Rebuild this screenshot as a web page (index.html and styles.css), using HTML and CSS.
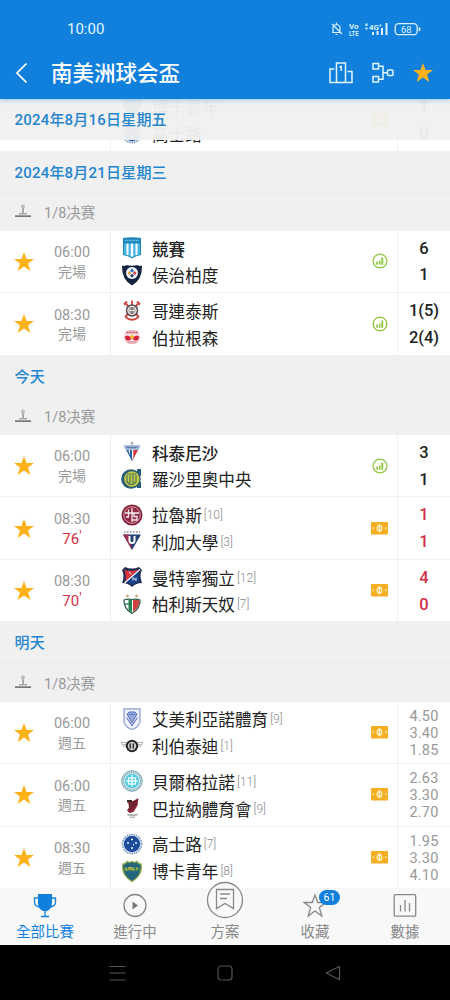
FILE: index.html
```
<!DOCTYPE html>
<html lang="zh-Hant">
<head>
    <meta charset="UTF-8">
    <title>南美洲球会盃</title>
    <link rel="stylesheet" href="styles.css">
</head>
<body>
<svg class="defs">
    <symbol id="star" viewBox="0 0 20 20"><path d="M10 0l2.6 7H20l-5.9 4.6L16.3 19 10 14.6 3.7 19l2.2-7.4L0 7h7.400z"/></symbol>
    <symbol id="stage" viewBox="0 0 17 14"><path d="M0 11.300h16v1.700H0z" fill="#777"/><path d="M4 10.500h8v-1.500H4z" fill="#aaa"/><path d="M7.200 4h1.600v5H7.200z" fill="#999"/><circle cx="8" cy="2.500" r="1.900" fill="#bbb"/></symbol>
    <symbol id="chart" viewBox="0 0 16 16"><circle cx="8" cy="8" r="6.900" fill="none" stroke="#8dc63f" stroke-width="1.300"/><path d="M4.300 8.500h1.700v3.200H4.300zM7 7.500h1.500v4.200H7zM9.300 4.500h1.900v7.200H9.300z" fill="#8dc63f"/></symbol>
    <symbol id="cash" viewBox="0 0 17 13"><rect width="17" height="12.500" rx="1" fill="#f5ae23"/><ellipse cx="8.500" cy="6.250" rx="2.200" ry="2.800" fill="none" stroke="#fff3c8" stroke-width="1.400"/><path d="M8.500 2v8.500" stroke="#fff3c8"/><path d="M1.700 4.700l1.600 1.550-1.600 1.550zM15.300 4.700l-1.600 1.550 1.600 1.550z" fill="#fff3c8"/></symbol>

    <!-- club crests -->
    <symbol id="racing" viewBox="0 0 22 22"><path d="M2 1q9-1.500 18 0v17q-5 .5-9 3.500-4-3-9-3.500z" fill="#1c84b8"/><path d="M3 6.500h16v11q-5 1-8 3-3-2-8-3z" fill="#48b4e0"/><path d="M5.500 6.500h2v11.500h-2zM9.800 6.500h2.400v13H9.800zM14.500 6.500h2v11.500h-2z" fill="#fff"/><path d="M4 3.500h14" stroke="#6fbfe3" stroke-width="1.500" stroke-dasharray="1.500 .7"/></symbol>
    <symbol id="huachipato" viewBox="0 0 22 22"><path d="M1 1.500q2.500 1 4.500-.5 5.500 1.500 11 0 2 1.500 4.500.5.500 14-10 20Q.5 15.500 1 1.500z" fill="#14233f"/><circle cx="11" cy="9" r="6" fill="#f1f3f8"/><path d="M11 4.500l2 2.200-2 1.800-2-1.800z" fill="#2b66b5"/><path d="M8.300 7l1.900 2.200-1.900 1.800-1.900-1.800z" fill="#e0a33c"/><path d="M13.700 7l1.900 2.200-1.900 1.800-1.900-1.800z" fill="#d33d45"/><path d="M11 9.800l2 2-2 1.800-2-1.800z" fill="#233865"/></symbol>
    <symbol id="corinthians" viewBox="0 0 22 22"><path d="M4 3l14 14M18 3L4 17" stroke="#c9453d" stroke-width="1.800"/><path d="M3 4.500l3-3M16 1.500l3 3M11 .5v5M4.500 17q6.500 5.500 13 0" stroke="#c9453d" stroke-width="1.800" fill="none"/><circle cx="11" cy="10.500" r="5.500" fill="#f4eeee" stroke="#5b4a4b" stroke-width="1.500"/><circle cx="11" cy="10.500" r="3.400" fill="#817779"/><path d="M9 8v5M13 8v5M8 10.500h6" stroke="#ddd"/></symbol>
    <symbol id="bragantino" viewBox="0 0 22 22"><rect x="4" y="4.500" width="14" height="13" rx="5" fill="#f6e9ec" stroke="#d8a3ac" stroke-width=".7"/><path d="M5.500 6.500h11" stroke="#ce5262" stroke-width="2" stroke-dasharray="1.400 .5"/><path d="M3.500 11q3-3 6 0h3q3-3 6 0l-2 3.500h-3L11 12.500 8.500 14.500h-3z" fill="#d81f3b"/><circle cx="11" cy="11" r="2" fill="#f1b82d"/><path d="M6.500 16h9" stroke="#dc8490" stroke-width="1.300"/></symbol>
    <symbol id="fortaleza" viewBox="0 0 22 22"><path d="M11 .3l.6 1.200 1.200.2-.9.9.2 1.200-1.100-.6-1.100.6.2-1.200-.9-.9 1.200-.2z" fill="#8899b0"/><path d="M3 5h16l-8 15z" fill="#2765aa"/><path d="M11 9h6l-6 11z" fill="#d63a43"/><path d="M7.500 9H9v5zM11 9h1.300v7L11 19z" fill="#fff"/><path d="M2.500 4h17l-2 5h-13z" fill="#aabfda"/><path d="M5 6.500h12" stroke="#456f9f" stroke-width="1.600" stroke-dasharray="1.600 .5"/></symbol>
    <symbol id="central" viewBox="0 0 22 22"><circle cx="10" cy="11" r="9.800" fill="#285c78"/><path d="M16 1h4v7h-4zM16 14h4v6h-4z" fill="#285c78"/><circle cx="10.800" cy="11" r="7.700" fill="#c5c944"/><path d="M6 7v7q4.500 5 9 0V7M9 7v8M12 7v8M6 6h9" fill="none" stroke="#4b7862" stroke-width="1.200"/></symbol>
    <symbol id="lanus" viewBox="0 0 22 22"><circle cx="11" cy="11" r="10.500" fill="#822138"/><circle cx="11" cy="11" r="8.300" fill="#932942" stroke="#dfbec6" stroke-width=".8"/><path d="M7.500 5.500V13H5M4 9h14M11 4v14M17 9h-4v3.500h3V16h-5" fill="none" stroke="#f5eef0" stroke-width="1.300"/></symbol>
    <symbol id="ldu" viewBox="0 0 22 22"><path d="M3 2h16" stroke="#8c8398" stroke-width="1.500" stroke-dasharray="1.500 1.500"/><path d="M2 4.500h18L11 20z" fill="#263f77"/><path d="M2 4.500h6L11 20z" fill="#9d2f4c"/><path d="M8.500 6v4.500q0 2.500 2.500 2.500t2.500-2.500V6" fill="none" stroke="#fff" stroke-width="2"/></symbol>
    <symbol id="medellin" viewBox="0 0 22 22"><path d="M1 4l3-3q7 3 14 0l3 3q-3 5 0 13-6 0-10 4-4-4-10-4 3-7 0-13z" fill="#202d57"/><path d="M3 4q8 2.500 15-1L4.500 15.500Q5.500 8 3 4z" fill="#df333c"/><path d="M18 5Q17 10 18.500 15.500 14 16 11 19q-3-3-6-3z" fill="#1b438b"/><path d="M3.500 17L19 3.500" stroke="#fff" stroke-width="1.200"/><path d="M8 5.500l2 3M12 14.500v-3l3 3v-3" stroke="#fff" stroke-width=".9" fill="none"/></symbol>
    <symbol id="palestino" viewBox="0 0 22 22"><path d="M6.500 1l.6 1.200 1.200.2-.9.9.2 1.200-1.100-.6-1.100.6.200-1.200-.9-.9 1.200-.2zM15.500 1l.6 1.200 1.200.2-.9.9.2 1.200-1.100-.6-1.100.6.200-1.200-.9-.9 1.200-.2z" fill="#b79b61"/><path d="M3 7q4-1.500 8-.5 4-1 8 .5.500 8.500-8 13.500Q2.500 15.500 3 7z" fill="#fff" stroke="#315b44" stroke-width="1.200"/><path d="M7.500 6.500H11v13.500l-3.500-3z" fill="#278357"/><path d="M12 7h6.300q.5 7-6.300 12z" fill="#cf4140"/><path d="M3 11h8" stroke="#277350" stroke-width="1.300"/></symbol>
    <symbol id="ameliano" viewBox="0 0 22 22"><path d="M3 .8h16V14q-1 5-8 7.500Q4 19 3 14z" fill="#eef0fb" stroke="#8a9bd0" stroke-width="1.200"/><path d="M6 6l2-2h6l2 2-5 9z" fill="#93a7dc" stroke="#6076bd"/><path d="M5.500 9.500L11 17.500l5.500-8M8 6.500h6" fill="none" stroke="#6076bd" stroke-width="1.100"/></symbol>
    <symbol id="libertad" viewBox="0 0 22 22"><path d="M0 7.500h6M16 7.500h6M1.500 9.500H5M20.500 9.500H17M3 11.500h2M19 11.500h-2M0 7.500l3 4.500M22 7.500L19 12" fill="none" stroke="#aaa" stroke-width=".9"/><circle cx="11" cy="11" r="5.200" fill="#ccc" stroke="#292929" stroke-width="2"/><path d="M8.500 8.500H10v5H8.500zM11.500 8.500H13v5h-1.500z" fill="#333"/></symbol>
    <symbol id="belgrano" viewBox="0 0 22 22"><circle cx="11" cy="11" r="10.300" fill="#cfe3e8" stroke="#7ba8b5" stroke-width="1"/><circle cx="11" cy="11" r="8.700" fill="none" stroke="#7ba8b5" stroke-width="1.300" stroke-dasharray="1.200 1"/><circle cx="11" cy="11" r="7" fill="#46c8df"/><path d="M11 5v12M5 11h12M7.500 8v6h7V8z" fill="none" stroke="#e8fbff" stroke-width="1.400"/></symbol>
    <symbol id="paranaense" viewBox="0 0 22 22"><path d="M7 4h5l5.500-3-1 7.500-4 6.500-4 1-2.500-2.500 2-3z" fill="#8c2433"/><path d="M8 10l8-7M8.500 13l7.500-7" stroke="#3b2730"/><path d="M6 3h5v2.500H6z" fill="#3a2a2d"/><path d="M6 17.500h11l-3 1.500H9zM9 20.500h5" stroke="#aaa" fill="#bbb" stroke-width=".8"/></symbol>
    <symbol id="cruzeiro" viewBox="0 0 22 22"><circle cx="11" cy="11" r="9.500" fill="none" stroke="#7e98c6" stroke-width="1.800" stroke-dasharray="1.500 .8"/><circle cx="11" cy="11" r="8.200" fill="#1d4c9c"/><path d="M11 5.500v2M10 6.500h2M7 9v2M6 10h2M15 9v2M14 10h2M11 14v2M10 15h2M12.500 11v1.500" stroke="#fff" stroke-width=".9"/></symbol>
    <symbol id="boca" viewBox="0 0 22 22"><path d="M2 4q3 0 4-2.500 2.500 1.500 5 0 2.500 1.500 5 0Q17 4 20 4q2 11-9 17.500Q0 15 2 4z" fill="#24647d" stroke="#8aa53f" stroke-width="1.200"/><path d="M3 7h16v4.500H3z" fill="#367a66"/><path d="M5 7.500V10h1.500M8 10V7.500h2V10M12 7.500V10h1.500M16 7.500V10" stroke="#d6c542" fill="none" stroke-width="1.200"/></symbol>
</svg>

<div class="app">
    <header class="header">
        <div class="status">
            <span class="clock">10:00</span>
            <svg width="92" height="16" viewBox="0 0 92 16" fill="none" stroke="#d9f1ff">
                <path d="M2 11.500h9M3 11V7q0-3 3.500-3.500Q10 4 10 7v4M5.500 13.500h2M2 3l10 10M6.500 1.500v2" stroke-width="1.200"/>
                <g fill="#d9f1ff" stroke="none" class="tiny"><text x="19" y="8">Vo</text><text x="19" y="15" textLength="9.500" lengthAdjust="spacingAndGlyphs">LTE</text><text x="39" y="8.500" textLength="13" lengthAdjust="spacingAndGlyphs">4G⁺</text></g>
                <path d="M36.500 2.500v2.500M36.500 6.500v2" stroke-width="2"/>
                <path d="M43 14v-3M47.500 14v-4M52 14V7M56.500 14V2" stroke-width="2"/>
                <rect x="65.200" y="2.700" width="22" height="11" rx="3.500" stroke-width="1.300"/><path d="M89.500 6.500v3.500" stroke-width="1.800"/>
                <text x="71" y="11.700" fill="#d9f1ff" stroke="none" class="battery">68</text>
            </svg>
        </div>
        <div class="titlebar">
            <svg class="back" width="14" height="22" viewBox="0 0 14 22"><path d="M11.500 1.500L2 11l9.500 9.500" fill="none" stroke="#fff" stroke-width="1.700"/></svg>
            <h1>南美洲球会盃</h1>
            <svg width="24" height="22" viewBox="0 0 24 22" fill="none" stroke="#e2f5ff" stroke-width="1.500"><path d="M7.500 20.500V1h9v19.500M5.500 7H1v13.500h22V9.500h-4.500M10.500 5.500l1.700-1V9"/></svg>
            <svg width="22" height="22" viewBox="0 0 22 22" fill="none" stroke="#e2f5ff" stroke-width="1.500"><rect x="1" y="1.500" width="5.500" height="5.500"/><rect x="1" y="14.500" width="5.500" height="5.500"/><rect x="15.500" y="8" width="5.500" height="5.500" rx="1"/><path d="M6.500 4.300H11v13H6.500M11 10.800h4.500"/></svg>
            <svg class="fav" width="20" height="20"><use href="#star"/></svg>
        </div>
    </header>

    <main class="list">
        <div class="sticky">2024年8月16日星期五</div>

        <section class="match under">
            <div class="when"></div>
            <div class="teams"><div class="team"><svg><use href="#boca"/></svg>博卡青年</div><div class="team"><svg><use href="#cruzeiro"/></svg>高士路</div></div>
            <svg class="cash"><use href="#cash"/></svg>
            <div class="score"><b>1</b><b>0</b></div>
        </section>

        <h2>2024年8月21日星期三</h2>
        <div class="stage"><svg><use href="#stage"/></svg>1/8决赛</div>
        <section class="match">
            <svg class="fav"><use href="#star"/></svg>
            <div class="when">06:00<span>完場</span></div>
            <div class="teams"><div class="team win"><svg><use href="#racing"/></svg>競賽</div><div class="team"><svg><use href="#huachipato"/></svg>侯治柏度</div></div>
            <svg class="chart"><use href="#chart"/></svg>
            <div class="score"><b>6</b><b>1</b></div>
        </section>
        <section class="match">
            <svg class="fav"><use href="#star"/></svg>
            <div class="when">08:30<span>完場</span></div>
            <div class="teams"><div class="team"><svg><use href="#corinthians"/></svg>哥連泰斯</div><div class="team"><svg><use href="#bragantino"/></svg>伯拉根森</div></div>
            <svg class="chart"><use href="#chart"/></svg>
            <div class="score"><b>1(5)</b><b>2(4)</b></div>
        </section>

        <h2>今天</h2>
        <div class="stage"><svg><use href="#stage"/></svg>1/8决赛</div>
        <section class="match">
            <svg class="fav"><use href="#star"/></svg>
            <div class="when">06:00<span>完場</span></div>
            <div class="teams"><div class="team win"><svg><use href="#fortaleza"/></svg>科泰尼沙</div><div class="team"><svg><use href="#central"/></svg>羅沙里奧中央</div></div>
            <svg class="chart"><use href="#chart"/></svg>
            <div class="score"><b>3</b><b>1</b></div>
        </section>
        <section class="match live">
            <svg class="fav"><use href="#star"/></svg>
            <div class="when">08:30<span>76<sup>'</sup></span></div>
            <div class="teams"><div class="team"><svg><use href="#lanus"/></svg>拉魯斯<small>[10]</small></div><div class="team"><svg><use href="#ldu"/></svg>利加大學<small>[3]</small></div></div>
            <svg class="cash"><use href="#cash"/></svg>
            <div class="score"><b>1</b><b>1</b></div>
        </section>
        <section class="match live">
            <svg class="fav"><use href="#star"/></svg>
            <div class="when">08:30<span>70<sup>'</sup></span></div>
            <div class="teams"><div class="team"><svg><use href="#medellin"/></svg>曼特寧獨立<small>[12]</small></div><div class="team"><svg><use href="#palestino"/></svg>柏利斯天奴<small>[7]</small></div></div>
            <svg class="cash"><use href="#cash"/></svg>
            <div class="score"><b>4</b><b>0</b></div>
        </section>

        <h2>明天</h2>
        <div class="stage"><svg><use href="#stage"/></svg>1/8决赛</div>
        <section class="match">
            <svg class="fav"><use href="#star"/></svg>
            <div class="when">06:00<span>週五</span></div>
            <div class="teams"><div class="team"><svg><use href="#ameliano"/></svg>艾美利亞諾體育<small>[9]</small></div><div class="team"><svg><use href="#libertad"/></svg>利伯泰迪<small>[1]</small></div></div>
            <svg class="cash"><use href="#cash"/></svg>
            <div class="odds"><span>4.50</span><span>3.40</span><span>1.85</span></div>
        </section>
        <section class="match">
            <svg class="fav"><use href="#star"/></svg>
            <div class="when">06:00<span>週五</span></div>
            <div class="teams"><div class="team"><svg><use href="#belgrano"/></svg>貝爾格拉諾<small>[11]</small></div><div class="team"><svg><use href="#paranaense"/></svg>巴拉納體育會<small>[9]</small></div></div>
            <svg class="cash"><use href="#cash"/></svg>
            <div class="odds"><span>2.63</span><span>3.30</span><span>2.70</span></div>
        </section>
        <section class="match">
            <svg class="fav"><use href="#star"/></svg>
            <div class="when">08:30<span>週五</span></div>
            <div class="teams"><div class="team"><svg><use href="#cruzeiro"/></svg>高士路<small>[7]</small></div><div class="team"><svg><use href="#boca"/></svg>博卡青年<small>[8]</small></div></div>
            <svg class="cash"><use href="#cash"/></svg>
            <div class="odds"><span>1.95</span><span>3.30</span><span>4.10</span></div>
        </section>
    </main>

    <nav class="tabs">
        <div class="tab active">
            <svg width="24" height="26" viewBox="0 0 24 26"><path d="M5 1h14v9q0 6-5 8h-4q-5-2-5-8z" fill="#1180dd"/><path d="M5 5H1.500v4q0 4 4.500 5M19 5h3.500v4q0 4-4.500 5M12 18v5M8 23.500h8" fill="none" stroke="#1180dd" stroke-width="1.300"/></svg>
            全部比賽
        </div>
        <div class="tab">
            <svg width="24" height="26" viewBox="0 0 24 26"><circle cx="12" cy="12.500" r="11" fill="none" stroke="#888" stroke-width="1.300"/><path d="M9.500 8.500l5.500 4-5.500 4z" fill="#777"/></svg>
            進行中
        </div>
        <div class="tab plan">
            <svg width="38" height="38" viewBox="0 0 38 38" fill="none" stroke="#888" stroke-width="1.300"><circle cx="19" cy="19" r="17.500" fill="#f9f9f9"/><path d="M10.500 8.500h17v19L19 22.500l-8.500 5zM14 13h10M14 17.500h7"/></svg>
            方案
        </div>
        <div class="tab">
            <svg width="24" height="26" viewBox="0 0 24 26"><path d="M12 2l2.800 7.500h8L16.300 14.500l2.500 8.500L12 18l-6.800 5 2.500-8.500L1.200 9.500h8z" fill="none" stroke="#888" stroke-width="1.300"/></svg>
            <span class="badge">61</span>
            收藏
        </div>
        <div class="tab">
            <svg width="24" height="26" viewBox="0 0 24 26" fill="none" stroke="#888" stroke-width="1.300"><rect x="1.200" y="1.700" width="21.500" height="21.500" rx="1"/><path d="M7.500 12v6.500M12 7v11.500M16.500 10v8.500"/></svg>
            數據
        </div>
    </nav>

    <footer class="system">
        <svg width="18" height="18" viewBox="0 0 18 18"><path d="M1.500 2.500h16M1.500 9h16M1.500 16h16"/></svg>
        <svg width="18" height="18" viewBox="0 0 18 18"><rect x="2" y="2" width="14" height="14" rx="3"/></svg>
        <svg width="18" height="18" viewBox="0 0 18 18"><path d="M15.500 2.500v13q-7-3-13-6.500 6-3.500 13-6.500z"/></svg>
    </footer>
</div>
</body>
</html>
```
FILE: styles.css
```
* {
    box-sizing: border-box;
}
body {
    margin: 0;
    font-family: Roboto, "Noto Sans CJK TC", sans-serif;
    color: #222;
}
svg {
    display: block;
    flex: none;
}
.defs {
    position: absolute;
    width: 0;
    height: 0;
}
.app {
    display: flex;
    flex-direction: column;
    width: 450px;
    height: 1000px;
    overflow: hidden;
}

/* header */
.header {
    position: relative;
    z-index: 3;
    height: 99px;
    flex: none;
    background: #1180dd;
    color: #fff;
    box-shadow: 0 1px 5px #8ec3ee;
}
.status {
    display: flex;
    justify-content: space-between;
    align-items: center;
    height: 46px;
    padding: 12px 28px 0 67px;
}
.clock {
    font-size: 15px;
    color: #e2f5ff;
}
.tiny {
    font-size: 8px;
    font-weight: 700;
}
.battery {
    font-size: 9.500px;
}
.titlebar {
    display: flex;
    align-items: center;
    height: 53px;
    padding: 0 17px 0 15px;
}
.titlebar h1 {
    flex: 1;
    margin: 2px 0 0 22px;
    font-size: 21.5px;
    font-weight: 500;
    line-height: 30px;
}
.titlebar svg + svg {
    margin-left: 19px;
}
.fav {
    width: 20px;
    height: 20px;
    fill: #ffb118;
}

/* match list */
.list {
    flex: 1;
    min-height: 0;
    margin-top: -10px;
    overflow: hidden;
    background: #fff;
}
.sticky {
    position: absolute;
    top: 99px;
    z-index: 2;
    width: 450px;
    background: rgba(240, 240, 240, .96);
}
.sticky, .list h2 {
    height: 41px;
    margin: 0;
    padding-left: 14.500px;
    font-size: 15px;
    font-weight: 500;
    line-height: 43px;
    letter-spacing: .2px;
    color: #2585cf;
}
.list h2 {
    height: 41.500px;
    background: #f0f0f0;
    border-bottom: 1px solid #ebebeb;
}
.stage {
    display: flex;
    align-items: center;
    gap: 12px;
    height: 37.700px;
    padding: 0 0 1px 15px;
    background: #f0f0f0;
    font-size: 14.500px;
    color: #999;
}
.stage svg {
    width: 17px;
    height: 14px;
}
.match {
    display: flex;
    align-items: center;
    height: 62.500px;
    padding-left: 14px;
    border-bottom: 1px solid #f0f0f0;
}
.under {
    padding-left: 34px;
}
.match .fav {
    margin-top: 1px;
}
.when {
    width: 76px;
    padding-top: 3px;
    font-size: 14.500px;
    line-height: 19.800px;
    text-align: center;
    color: #999;
}
.when span {
    display: block;
    font-size: 14px;
}
.live .when span {
    font-size: 15px;
    color: #d22f45;
}
.when sup {
    font-size: 14px;
    line-height: 0;
    vertical-align: 3px;
}
.teams {
    display: flex;
    flex-direction: column;
    justify-content: center;
    flex: 1;
    height: 100%;
    padding-left: 10px;
    border-left: 1px solid #f0f0f0;
}
.team {
    display: flex;
    align-items: center;
    height: 26.700px;
    padding-top: 1px;
    font-size: 16.600px;
    white-space: nowrap;
}
.team svg {
    width: 22px;
    height: 22px;
    margin: -1px 9px 0 0;
}
.team small {
    margin: 0 0 0 2px;
    font-size: 12px;
    font-weight: 300;
    color: #888;
}
.win {
    font-weight: 500;
}
.chart {
    width: 16px;
    height: 16px;
    margin-right: 9px;
}
.cash {
    width: 17px;
    height: 13px;
    margin-right: 9.500px;
}
.score, .odds {
    display: flex;
    flex-direction: column;
    justify-content: center;
    width: 53px;
    height: 100%;
    padding-top: 2px;
    border-left: 1px solid #f0f0f0;
    text-align: center;
}
.score b {
    font-size: 16.500px;
    font-weight: 500;
    line-height: 26.700px;
}
.live .score {
    color: #d22f45;
}
.odds span {
    font-size: 14.500px;
    line-height: 17.200px;
    letter-spacing: .2px;
    color: #999;
}

/* bottom bars */
.tabs {
    position: relative;
    z-index: 2;
    display: flex;
    flex: none;
    height: 57px;
    background: #f8f8f8;
}
.tab {
    position: relative;
    display: flex;
    flex-direction: column;
    align-items: center;
    justify-content: flex-end;
    gap: 4px;
    width: 90px;
    padding-bottom: 2px;
    font-size: 14.400px;
    line-height: 20px;
    color: #888;
}
.active {
    color: #1180dd;
}
.badge {
    position: absolute;
    top: 2px;
    left: 49px;
    width: 21px;
    height: 15px;
    border-radius: 8px;
    background: #1180dd;
    color: #fff;
    font-size: 10.500px;
    line-height: 15px;
    text-align: center;
}
.system {
    display: flex;
    justify-content: center;
    align-items: center;
    gap: 90px;
    flex: none;
    height: 55px;
    background: #000;
}
.system svg {
    fill: none;
    stroke: #555;
    stroke-width: 1.200;
}
```
